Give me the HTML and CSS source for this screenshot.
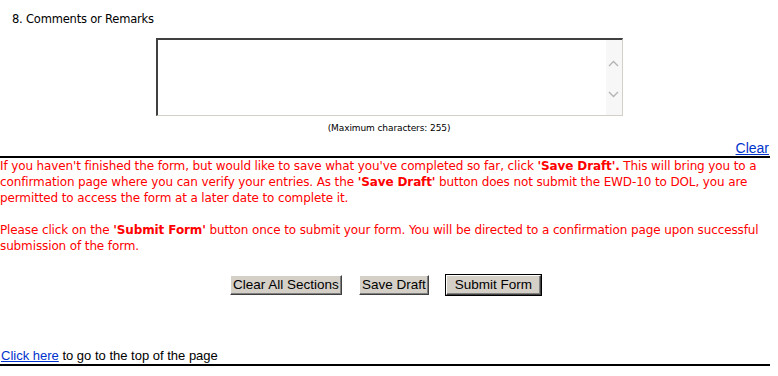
FILE: index.html
```html
<!DOCTYPE html>
<html lang="en">
<head>
  <meta charset="UTF-8" />
  <title>EWD-10 Comments</title>
  <link rel="stylesheet" href="styles.css">
</head>
<body>
  <div class="page">
    <div class="question">8. Comments or Remarks</div>

    <div class="field">
      <div class="comment-box">
        <textarea class="comment" maxlength="255"></textarea>
        <div class="scroll">
          <svg width="15" height="14" viewBox="0 0 15 14"><path d="M3 9 L7.5 4.5 L12 9" fill="none" stroke="#b4b4b4" stroke-width="1.4"/></svg>
          <svg width="15" height="14" viewBox="0 0 15 14"><path d="M3 5 L7.5 9.5 L12 5" fill="none" stroke="#b4b4b4" stroke-width="1.4"/></svg>
        </div>
      </div>
      <div class="hint">(Maximum characters: 255)</div>
    </div>

    <div class="clear-row"><a href="#">Clear</a></div>
    <div class="rule"></div>

    <p class="notice">If you haven't finished the form, but would like to save what you've completed so far, click <b>'Save Draft'.</b> This will bring you to a confirmation page where you can verify your entries. As the <b>'Save Draft'</b> button does not submit the EWD-10 to DOL, you are permitted to access the form at a later date to complete it.</p>
    <p class="notice">Please click on the <b>'Submit Form'</b> button once to submit your form. You will be directed to a confirmation page upon successful submission of the form.</p>

    <div class="actions">
      <button class="btn">Clear All Sections</button>
      <button class="btn">Save Draft</button>
      <button class="btn btn-default">Submit Form</button>
    </div>

    <div class="top-link"><a href="#">Click here</a> to go to the top of the page</div>
    <div class="rule"></div>
  </div>
</body>
</html>
```

FILE: styles.css
```css
* {
  box-sizing: border-box;
}
body {
  margin: 0;
  background: #fff;
  color: #000;
  font-family: 'DejaVu Sans', Verdana, sans-serif;
}
.page {
  width: 770px;
}
.question {
  padding: 12px 0 0 12px;
  font-size: 11.5px;
  line-height: 14px;
  letter-spacing: -0.2px;
}
.field {
  display: flex;
  flex-direction: column;
  align-items: center;
  margin-top: 12px;
}
.comment-box {
  display: flex;
  width: 467px;
  height: 78px;
  margin-left: 8px;
  border-top: 2px solid #404040;
  border-left: 2px solid #404040;
  border-right: 1px solid #d4d0c8;
  border-bottom: 1px solid #d4d0c8;
  background: #fff;
}
.comment {
  flex: 1;
  border: none;
  resize: none;
  overflow: hidden;
  outline: none;
  font-family: 'Liberation Mono', monospace;
  font-size: 13px;
}
.scroll {
  width: 16px;
  background: #f7f7f7;
  display: flex;
  flex-direction: column;
  justify-content: space-between;
  padding: 17px 0 14px;
}
.hint {
  margin: 6px 0 0 8px;
  font-size: 9px;
  line-height: 12px;
  letter-spacing: -0.1px;
}
.clear-row {
  text-align: right;
  margin-top: 6px;
  font-family: 'Liberation Sans', Arial, sans-serif;
  font-size: 14px;
  line-height: 16px;
  padding-right: 1px;
}
a {
  color: #0033cc;
}
.rule {
  height: 2px;
  background: #000;
}
.notice {
  margin: 0 0 16px;
  color: #ff0000;
  font-size: 12px;
  line-height: 16px;
  letter-spacing: -0.12px;
}
.notice b {
  font-weight: bold;
}
.actions {
  display: flex;
  justify-content: center;
  gap: 17px;
  margin-top: 21px;
  padding-left: 1px;
}
.btn {
  height: 20px;
  padding: 0 2px;
  background: #d4d0c8;
  color: #000;
  font-family: 'Liberation Sans', Arial, sans-serif;
  font-size: 13.5px;
  line-height: 16px;
  border: 1px solid;
  border-color: #fff #404040 #404040 #fff;
  box-shadow: inset -1px -1px 0 #808080;
}
.btn-default {
  padding: 0 8px;
  outline: 1px solid #000;
}
.top-link {
  margin-top: 52px;
  font-family: 'Liberation Sans', Arial, sans-serif;
  font-size: 13px;
  line-height: 17px;
  padding-left: 1px;
}
```
